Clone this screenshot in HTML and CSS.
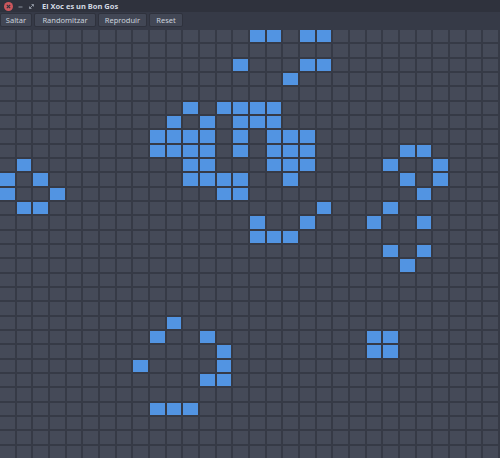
FILE: index.html
```html
<!DOCTYPE html>
<html lang="ca">
<head>
<meta charset="utf-8">
<title>El Xoc es un Bon Gos</title>
<link rel="stylesheet" href="styles.css">
</head>
<body>
<div class="window">
  <header class="titlebar">
    <div class="controls">
      <svg class="ctl close" width="9" height="9" viewBox="0 0 9 9"><circle cx="4.5" cy="4.5" r="4.5" fill="#cc575d"/><path d="M2.8 2.8 L6.2 6.2 M6.2 2.8 L2.8 6.2" stroke="#2f343f" stroke-width="1.2"/></svg>
      <svg class="ctl" width="7" height="7" viewBox="0 0 7 7"><path d="M1.5 4 H5.5" stroke="#8a909c" stroke-width="1"/></svg>
      <svg class="ctl" width="7" height="7" viewBox="0 0 7 7"><path d="M1.5 5.5 L5.5 1.5 M3.5 1.5 H5.5 V3.5 M1.5 3.5 V5.5 H3.5" stroke="#8a909c" stroke-width="1" fill="none"/></svg>
    </div>
    <span class="title">El Xoc es un Bon Gos</span>
  </header>
  <nav class="toolbar">
    <button class="btn btn-saltar">Saltar</button>
    <button class="btn btn-random">Randomitzar</button>
    <button class="btn btn-play">Reproduir</button>
    <button class="btn btn-reset">Reset</button>
  </nav>
  <main class="board" id="board"></main>
</div>
<script src="script.js"></script>
</body>
</html>
```

FILE: styles.css
```css
html, body {
  margin: 0;
  padding: 0;
  width: 500px;
  height: 458px;
  overflow: hidden;
  background: #383c4a;
  font-family: "Noto Sans", "Open Sans", sans-serif;
}
.window {
  display: flex;
  flex-direction: column;
  width: 500px;
  height: 458px;
}
.titlebar {
  height: 12px;
  flex: none;
  background: #2f323d;
  display: flex;
  align-items: center;
}
.controls {
  display: flex;
  align-items: center;
  gap: 4px;
  padding-left: 4px;
  width: 34px;
}
.ctl { display: block; }
.title {
  color: #d3dae3;
  font-weight: bold;
  font-size: 7.5px;
  line-height: 12px;
  padding-left: 4px;
}
.toolbar {
  height: 18px;
  flex: none;
  box-sizing: border-box;
  padding-top: 1px;
  display: flex;
  align-items: flex-start;
  gap: 2px;
  background: #363a47;
}
.btn {
  height: 14px;
  margin: 0;
  padding: 0;
  border: 1px solid #2f323d;
  border-radius: 2px;
  background: #424755;
  color: #cbd2dc;
  font-family: "Noto Sans", "Open Sans", sans-serif;
  font-size: 7.5px;
  line-height: 12px;
}
.btn-saltar { width: 32px; }
.btn-random { width: 62px; }
.btn-play { width: 49px; }
.btn-reset { width: 34px; }
.board {
  flex: none;
  width: 500px;
  height: 428px;
  box-sizing: border-box;
  padding-right: 2px;
  display: grid;
  grid-template-columns: repeat(30, 1fr);
  grid-template-rows: repeat(30, 1fr);
  gap: 2px;
  background: #363a46;
}
.cell {
  background: #454a58;
}
.cell.alive {
  background: #5294e2;
}
```

FILE: script.js
```js
var live = {
  0: [15, 16, 18, 19],
  2: [14, 18, 19],
  3: [17],
  5: [11, 13, 14, 15, 16],
  6: [10, 12, 14, 15, 16],
  7: [9, 10, 11, 12, 14, 16, 17, 18],
  8: [9, 10, 11, 12, 14, 16, 17, 18, 24, 25],
  9: [1, 11, 12, 16, 17, 18, 23, 26],
  10: [0, 2, 11, 12, 13, 14, 17, 24, 26],
  11: [0, 3, 13, 14, 25],
  12: [1, 2, 19, 23],
  13: [15, 18, 22, 25],
  14: [15, 16, 17],
  15: [23, 25],
  16: [24],
  20: [10],
  21: [9, 12, 22, 23],
  22: [13, 22, 23],
  23: [8, 13],
  24: [12, 13],
  26: [9, 10, 11]
};
var board = document.getElementById('board');
for (var r = 0; r < 30; r++) {
  var row = live[r] || [];
  for (var c = 0; c < 30; c++) {
    var d = document.createElement('div');
    d.className = row.indexOf(c) >= 0 ? 'cell alive' : 'cell';
    board.appendChild(d);
  }
}
```
